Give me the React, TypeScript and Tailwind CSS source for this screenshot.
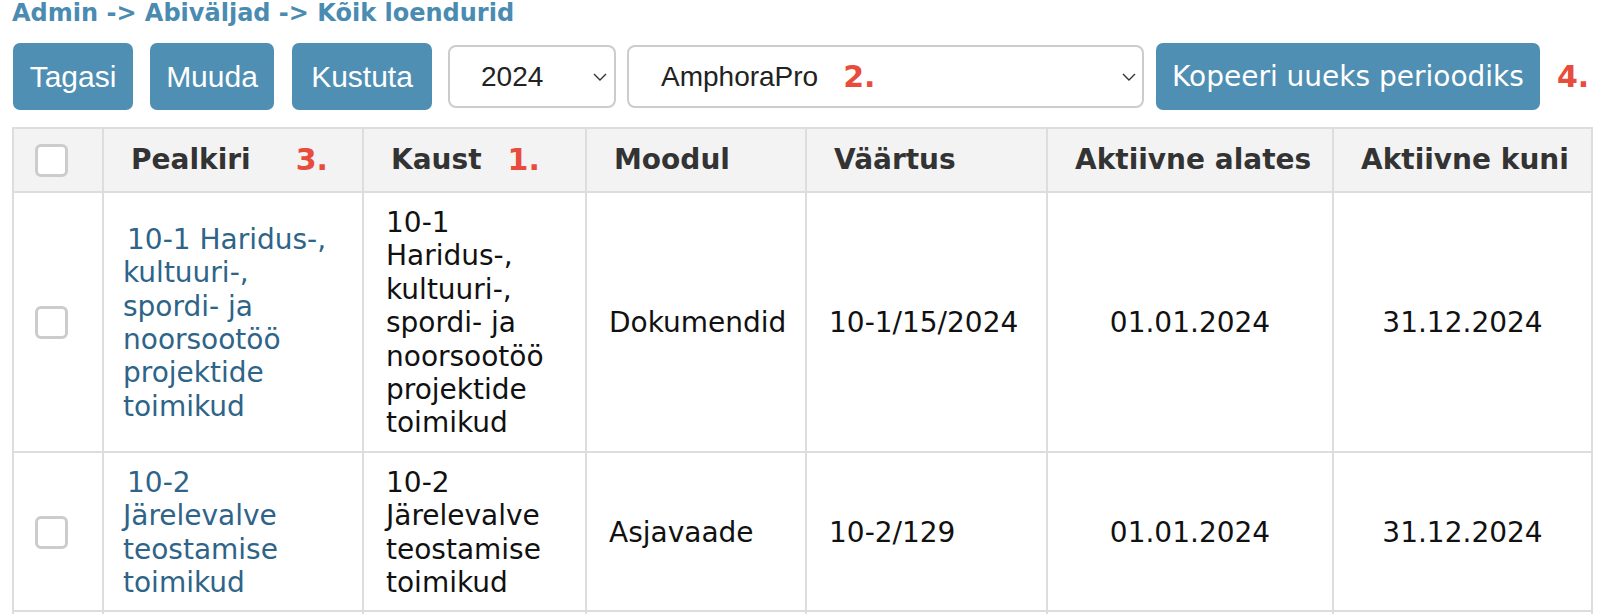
import React from "react";

const Chevron = () => (
  <svg width="14" height="8" viewBox="0 0 14 8" className="shrink-0">
    <polyline points="1,1 7,7 13,1" fill="none" stroke="#333" strokeWidth="1.4" />
  </svg>
);

const Checkbox = () => (
  <div className="h-[33px] w-[33px] rounded-[6px] border-[3px] border-[#cccccc] bg-white" />
);

const red = "font-['DejaVu_Sans',Verdana,sans-serif] font-bold text-[30px] leading-none text-[#e74c3c]";

export default function App() {
  const btn =
    "flex h-[67px] shrink-0 items-center justify-center rounded-[7px] bg-[#4f8fb3] text-white";
  const arial = "font-['Liberation_Sans',Arial,sans-serif] text-[30px]";
  const th =
    "h-[64px] whitespace-nowrap border-2 border-[#dddddd] bg-[#f3f3f3] pl-[27px] pr-[8px] text-left align-middle text-[28px] font-bold leading-[34px] text-[#333333]";
  const td = "border-2 border-[#dddddd] px-[22px] pt-[13px] pb-[11px] text-left align-middle text-[28px] leading-[33.4px]";
  const tdc = "border-2 border-[#dddddd] px-[8px] pt-[13px] pb-[11px] text-center align-middle text-[28px] leading-[33.4px]";

  return (
    <div className="min-h-screen bg-white font-['DejaVu_Sans',Verdana,sans-serif] text-[#111111]">
      <div className="pl-[12px] text-[24px] font-bold leading-[27px] text-[#4a8bb2]">
        Admin -&gt; Abiväljad -&gt; Kõik loendurid
      </div>

      <div className="mt-[16px] flex h-[67px] items-center pl-[13px]">
        <button className={`${btn} ${arial} w-[120px]`}>Tagasi</button>
        <button className={`${btn} ${arial} ml-[17px] w-[124px]`}>Muuda</button>
        <button className={`${btn} ${arial} ml-[18px] w-[140px]`}>Kustuta</button>

        <div className="ml-[16px] flex h-[63px] w-[168px] items-center rounded-[8px] border-2 border-[#cccccc] bg-white pl-[31px] pr-[7px] font-['Liberation_Sans',Arial,sans-serif] text-[28px] text-[#222222]">
          <span className="flex-1">2024</span>
          <Chevron />
        </div>

        <div className="ml-[11px] flex h-[63px] w-[517px] items-center rounded-[8px] border-2 border-[#cccccc] bg-white pl-[32px] pr-[6px] font-['Liberation_Sans',Arial,sans-serif] text-[28px] text-[#222222]">
          <span>AmphoraPro</span>
          <span className={`${red} ml-[25px]`}>2.</span>
          <span className="flex-1" />
          <Chevron />
        </div>

        <button className={`${btn} ml-[12px] w-[384px] text-[28px]`}>Kopeeri uueks perioodiks</button>
        <span className={`${red} ml-[17px]`}>4.</span>
      </div>

      <table className="ml-[12px] mt-[17px] w-[1579px] table-fixed border-collapse border-2 border-[#dddddd]">
        <colgroup>
          <col className="w-[90px]" />
          <col className="w-[260px]" />
          <col className="w-[223px]" />
          <col className="w-[220px]" />
          <col className="w-[241px]" />
          <col className="w-[286px]" />
          <col className="w-[259px]" />
        </colgroup>
        <thead>
          <tr>
            <th className={`${th} !px-[21px]`}>
              <Checkbox />
            </th>
            <th className={th}>
              <div className="flex items-center">
                <span>Pealkiri</span>
                <span className={`${red} ml-[45px]`}>3.</span>
              </div>
            </th>
            <th className={th}>
              <div className="flex items-center">
                <span>Kaust</span>
                <span className={`${red} ml-[26px]`}>1.</span>
              </div>
            </th>
            <th className={th}>Moodul</th>
            <th className={th}>Väärtus</th>
            <th className={th}>Aktiivne alates</th>
            <th className={th}>Aktiivne kuni</th>
          </tr>
        </thead>
        <tbody>
          <tr>
            <td className={`${td} !px-[21px]`}>
              <Checkbox />
            </td>
            <td className={`${td} !pl-[19px]`}>
              <a className="block indent-[4px] text-[#2e6488]">
                10-1 Haridus-, kultuuri-, spordi- ja noorsootöö projektide toimikud
              </a>
            </td>
            <td className={td}>10-1 Haridus-, kultuuri-, spordi- ja noorsootöö projektide toimikud</td>
            <td className={td}>Dokumendid</td>
            <td className={td}>10-1/15/2024</td>
            <td className={tdc}>01.01.2024</td>
            <td className={tdc}>31.12.2024</td>
          </tr>
          <tr>
            <td className={`${td} !px-[21px]`}>
              <Checkbox />
            </td>
            <td className={`${td} !pl-[19px]`}>
              <a className="block indent-[4px] text-[#2e6488]">10-2 Järelevalve teostamise toimikud</a>
            </td>
            <td className={td}>10-2 Järelevalve teostamise toimikud</td>
            <td className={td}>Asjavaade</td>
            <td className={td}>10-2/129</td>
            <td className={tdc}>01.01.2024</td>
            <td className={tdc}>31.12.2024</td>
          </tr>
          <tr>
            <td className={`${td} h-[120px]`} />
            <td className={td} />
            <td className={td} />
            <td className={td} />
            <td className={td} />
            <td className={tdc} />
            <td className={tdc} />
          </tr>
        </tbody>
      </table>
    </div>
  );
}
